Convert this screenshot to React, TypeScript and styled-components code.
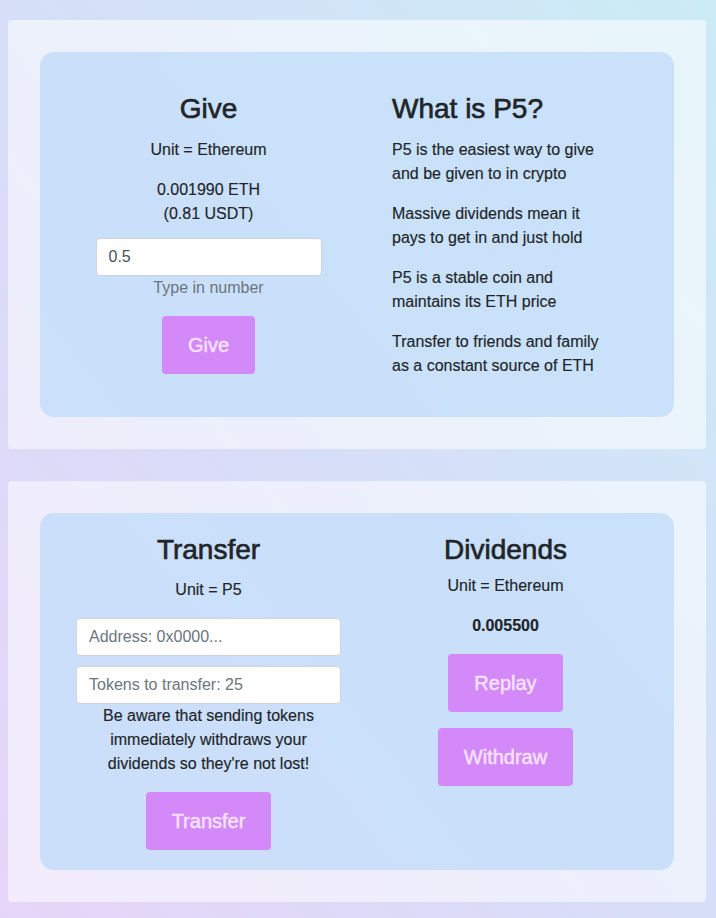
import React from 'react';
import styled, { createGlobalStyle } from 'styled-components';

const Global = createGlobalStyle`
  html, body { margin: 0; padding: 0; }
  body {
    font-family: "Liberation Sans", Arial, Helvetica, sans-serif;
    font-size: 16px;
    line-height: 1.5;
    color: #212529;
    min-height: 918px;
    background: linear-gradient(to top right, #e6d5f8 0%, #d9dcf8 40%, #d2e5f8 70%, #cbebf6 100%);
    background-attachment: fixed;
  }
  * { box-sizing: border-box; }
`;

const Page = styled.main`
  padding: 20px 10px 16px 8px;
  display: flex;
  flex-direction: column;
  gap: 32px;
`;

const Card = styled.section`
  background: rgba(255, 255, 255, 0.55);
  border-radius: 4px;
  padding: 32px;
`;

const Panel = styled.div<{ $top: number; $bottom: number }>`
  display: grid;
  grid-template-columns: 1fr 1fr;
  background: rgba(188, 218, 250, 0.72);
  border-radius: 14px;
  padding: ${(p) => p.$top}px 20px ${(p) => p.$bottom}px;
`;

const Column = styled.div`
  display: flex;
  flex-direction: column;
  align-items: center;
  text-align: center;
`;

const InfoColumn = styled.div`
  padding-left: 35px;
  max-width: 257px;
`;

const Heading = styled.h2<{ $gap?: number }>`
  font-size: 28px;
  line-height: 1.2;
  font-weight: 500;
  margin: 0 0 ${(p) => p.$gap ?? 12}px;
  -webkit-text-stroke: 0.65px #212529;
  color: #212529;
`;

const Text = styled.p<{ $gap?: number; $bold?: boolean }>`
  margin: 0 0 ${(p) => p.$gap ?? 16}px;
  font-weight: ${(p) => (p.$bold ? 700 : 400)};
  -webkit-text-stroke: 0.15px #212529;
`;

const Para = styled.p`
  margin: 0 0 16px;
  -webkit-text-stroke: 0.15px #212529;
  &:last-child { margin-bottom: 0; }
`;

const Hint = styled.small`
  display: block;
  font-size: 16px;
  color: #6c757d;
  margin-bottom: 16px;
`;

const Warning = styled.p`
  width: 240px;
  margin: 0 0 16px;
  -webkit-text-stroke: 0.15px #212529;
`;

const Input = styled.input<{ $width: number }>`
  width: ${(p) => p.$width}px;
  height: 38px;
  padding: 6px 12px;
  font-family: inherit;
  font-size: 16px;
  line-height: 1.5;
  color: #495057;
  background: #fff;
  border: 1px solid #ced4da;
  border-radius: 4px;
  outline: none;
  &::placeholder { color: #6c757d; opacity: 1; }
`;

const Stack = styled.div`
  display: flex;
  flex-direction: column;
  align-items: center;
  gap: 10px;
`;

const Button = styled.button`
  background: #d38af8;
  color: #f6e2fd;
  -webkit-text-stroke: 0.45px #f6e2fd;
  border: none;
  border-radius: 4px;
  font-family: inherit;
  font-size: 20px;
  line-height: 30px;
  padding: 14px 26px;
  cursor: pointer;
`;

const ButtonStack = styled.div`
  display: flex;
  flex-direction: column;
  align-items: center;
  gap: 16px;
`;

export default function App() {
  return (
    <>
      <Global />
      <Page>
        <Card>
          <Panel $top={40} $bottom={39}>
            <Column>
              <Heading>Give</Heading>
              <Text>Unit = Ethereum</Text>
              <Text $gap={12}>
                0.001990 ETH
                <br />
                (0.81 USDT)
              </Text>
              <Input $width={226} defaultValue="0.5" />
              <Hint>Type in number</Hint>
              <Button>Give</Button>
            </Column>
            <InfoColumn>
              <Heading>What is P5?</Heading>
              <Para>P5 is the easiest way to give and be given to in crypto</Para>
              <Para>Massive dividends mean it pays to get in and just hold</Para>
              <Para>P5 is a stable coin and maintains its ETH price</Para>
              <Para>Transfer to friends and family as a constant source of ETH</Para>
            </InfoColumn>
          </Panel>
        </Card>
        <Card>
          <Panel $top={20} $bottom={20}>
            <Column>
              <Heading>Transfer</Heading>
              <Text>Unit = P5</Text>
              <Stack>
                <Input $width={265} placeholder="Address: 0x0000..." />
                <Input $width={265} placeholder="Tokens to transfer: 25" />
              </Stack>
              <Warning>
                Be aware that sending tokens immediately withdraws your dividends so they're not lost!
              </Warning>
              <Button>Transfer</Button>
            </Column>
            <Column>
              <Heading $gap={8}>Dividends</Heading>
              <Text>Unit = Ethereum</Text>
              <Text $bold>0.005500</Text>
              <ButtonStack>
                <Button>Replay</Button>
                <Button>Withdraw</Button>
              </ButtonStack>
            </Column>
          </Panel>
        </Card>
      </Page>
    </>
  );
}
